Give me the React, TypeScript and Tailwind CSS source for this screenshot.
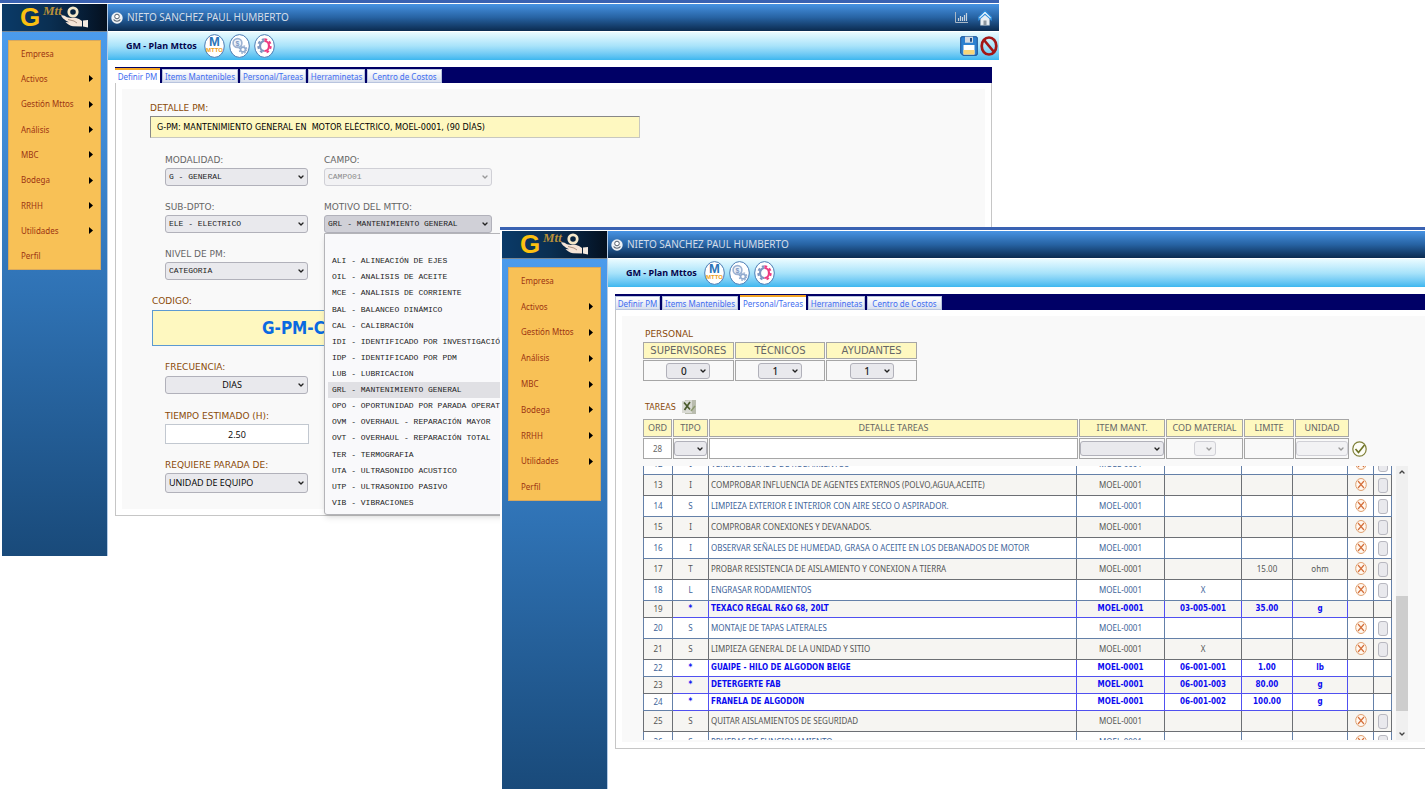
import { ReactNode } from 'react';
import { ChevronDown, ChevronUp } from 'lucide-react';
import { clsx } from 'clsx';

const MENU = [
  { label: 'Empresa', sub: false },
  { label: 'Activos', sub: true },
  { label: 'Gestión Mttos', sub: true },
  { label: 'Análisis', sub: true },
  { label: 'MBC', sub: true },
  { label: 'Bodega', sub: true },
  { label: 'RRHH', sub: true },
  { label: 'Utilidades', sub: true },
  { label: 'Perfil', sub: false },
];

const TABS = [
  { label: 'Definir PM', width: 'w-[45px]' },
  { label: 'Items Mantenibles', width: 'w-[76px]' },
  { label: 'Personal/Tareas', width: 'w-[66px]' },
  { label: 'Herraminetas', width: 'w-[57px]' },
  { label: 'Centro de Costos', width: 'w-[75px]' },
];

const MOTIVOS = [
  '',
  'ALI - ALINEACIÓN DE EJES',
  'OIL - ANALISIS DE ACEITE',
  'MCE - ANALISIS DE CORRIENTE',
  'BAL - BALANCEO DINÁMICO',
  'CAL - CALIBRACIÓN',
  'IDI - IDENTIFICADO POR INVESTIGACIÓN',
  'IDP - IDENTIFICADO POR PDM',
  'LUB - LUBRICACION',
  'GRL - MANTENIMIENTO GENERAL',
  'OPO - OPORTUNIDAD POR PARADA OPERATIVA',
  'OVM - OVERHAUL - REPARACIÓN MAYOR',
  'OVT - OVERHAUL - REPARACIÓN TOTAL',
  'TER - TERMOGRAFIA',
  'UTA - ULTRASONIDO ACUSTICO',
  'UTP - ULTRASONIDO PASIVO',
  'VIB - VIBRACIONES',
];

interface Task {
  ord: number;
  tipo: string;
  detalle: string;
  material?: string;
  limite?: string;
  unidad?: string;
}

const TASKS: Task[] = [
  { ord: 12, tipo: 'I', detalle: 'VERIFICA ESTADO DE RODAMIENTOS' },
  { ord: 13, tipo: 'I', detalle: 'COMPROBAR INFLUENCIA DE AGENTES EXTERNOS (POLVO,AGUA,ACEITE)' },
  { ord: 14, tipo: 'S', detalle: 'LIMPIEZA EXTERIOR E INTERIOR CON AIRE SECO O ASPIRADOR.' },
  { ord: 15, tipo: 'I', detalle: 'COMPROBAR CONEXIONES Y DEVANADOS.' },
  { ord: 16, tipo: 'I', detalle: 'OBSERVAR SEÑALES DE HUMEDAD, GRASA O ACEITE EN LOS DEBANADOS DE MOTOR' },
  { ord: 17, tipo: 'T', detalle: 'PROBAR RESISTENCIA DE AISLAMIENTO Y CONEXION A TIERRA', limite: '15.00', unidad: 'ohm' },
  { ord: 18, tipo: 'L', detalle: 'ENGRASAR RODAMIENTOS', material: 'X' },
  { ord: 19, tipo: '*', detalle: 'TEXACO REGAL R&O 68, 20LT', material: '03-005-001', limite: '35.00', unidad: 'g' },
  { ord: 20, tipo: 'S', detalle: 'MONTAJE DE TAPAS LATERALES' },
  { ord: 21, tipo: 'S', detalle: 'LIMPIEZA GENERAL DE LA UNIDAD Y SITIO', material: 'X' },
  { ord: 22, tipo: '*', detalle: 'GUAIPE - HILO DE ALGODON BEIGE', material: '06-001-001', limite: '1.00', unidad: 'lb' },
  { ord: 23, tipo: '*', detalle: 'DETERGERTE FAB', material: '06-001-003', limite: '80.00', unidad: 'g' },
  { ord: 24, tipo: '*', detalle: 'FRANELA DE ALGODON', material: '06-001-002', limite: '100.00', unidad: 'g' },
  { ord: 25, tipo: 'S', detalle: 'QUITAR AISLAMIENTOS DE SEGURIDAD' },
  { ord: 26, tipo: 'S', detalle: 'PRUEBAS DE FUNCIONAMIENTO' },
];

function Logo() {
  return (
    <svg viewBox="0 0 105 27" className="h-[27px] w-[105px] shrink-0" aria-label="GMtto">
      <defs>
        <linearGradient id="logoBg" x1="0" x2="1" y1="0" y2="0">
          <stop offset="0" stopColor="#0a3a68" />
          <stop offset="0.45" stopColor="#0a2f52" />
          <stop offset="0.8" stopColor="#061c34" />
          <stop offset="1" stopColor="#04101f" />
        </linearGradient>
      </defs>
      <rect width="105" height="27" fill="url(#logoBg)" />
      <text x="18" y="22" fontFamily="Liberation Sans" fontWeight="bold" fontSize="26" fill="#fcc010">
        G
      </text>
      <text x="41" y="11" fontFamily="Liberation Serif" fontStyle="italic" fontWeight="bold" fontSize="13" fill="#b8903a">
        Mtt
      </text>
      <circle cx="71" cy="8" r="4.2" fill="none" stroke="#f3e6c8" strokeWidth="2.8" />
      <path
        d="M59 11.500c2-.6 4 .4 6 1.800l4 .8c2-.8 5-.6 8 .9l3 2v5.500l-9-.2c-3-.4-5.500-2-7.500-4.200l3.500.2-3-1.600c-2-1.400-4-3-5-5.200z"
        fill="#f5e4d6"
      />
      <path d="M66 15.500l6 1.500 3 2" fill="none" stroke="#8a6f5c" strokeWidth="0.700" />
      <path d="M81 16.500l5-.5v7.500l-5-1z" fill="#f3e9df" />
    </svg>
  );
}

function ToolButton({ label, children }: { label: string; children: ReactNode }) {
  return (
    <button type="button" aria-label={label} className="h-6 w-[21px]">
      <svg viewBox="0 0 21 24" className="h-6 w-[21px]">
        <ellipse cx="10.500" cy="12" rx="9.800" ry="11.400" fill="#fff" stroke="#4a7cb4" />
        {children}
      </svg>
    </button>
  );
}

function Sidebar({ menuHeight }: { menuHeight: string }) {
  return (
    <aside className="flex w-[106px] shrink-0 flex-col border-r border-[#b4cbe6]">
      <Logo />
      <div className="grow border-t border-[#7a8894] bg-linear-to-b from-[#4b9bec] via-[#2f72b4] to-[#194a7a] px-1.5 pt-2">
        <nav className={clsx('flex flex-col border border-[#d8a95e] bg-[#f8c156]', menuHeight)}>
          {MENU.map((item) => (
            <a
              key={item.label}
              href="#"
              className="flex flex-1 items-center justify-between pl-3 pr-[7px] font-['Noto_Sans'] text-[8px] text-[#9c3412]"
            >
              {item.label}
              {item.sub && (
                <svg viewBox="0 0 4 7" className="h-[7px] w-1">
                  <path d="M0 0l4 3.500-4 3.500z" fill="#000" />
                </svg>
              )}
            </a>
          ))}
        </nav>
      </div>
    </aside>
  );
}

function AppHeader({ actions }: { actions: boolean }) {
  return (
    <header className="flex h-[27px] items-center bg-linear-to-b from-[#4793e3] via-[#2763a3] to-[#0b2b50] pl-[3px] pr-[7px]">
      <svg viewBox="0 0 12 12" className="mr-1 h-3 w-3">
        <circle cx="6" cy="6" r="5.700" fill="#eef2f6" />
        <circle cx="6" cy="4.500" r="2.300" fill="#fff" stroke="#555f6b" />
        <path d="M2.600 7.500c1.800 2.300 5 2.300 6.800 0" fill="none" stroke="#555f6b" strokeWidth="1.200" />
      </svg>
      <span className="grow font-['Noto_Sans'] text-[10px] text-[#d3dde9]">NIETO SANCHEZ PAUL HUMBERTO</span>
      {actions && (
        <div className="flex items-center gap-2.5">
          <button type="button" aria-label="Indicadores">
            <svg viewBox="0 0 13 11" className="h-[11px] w-[13px]">
              <path d="M.5 0v10.500H13" fill="none" stroke="#a8b7c6" />
              <path d="M3.500 9V6M5.500 9V4M7.500 9V5M9.500 9V3M11.500 9V1" stroke="#c8d3de" strokeWidth="1.200" />
            </svg>
          </button>
          <button type="button" aria-label="Inicio">
            <svg viewBox="0 0 14 16" className="h-4 w-3.5">
              <path d="M2.500 8L7 4.500 11.500 8v7.300h-9z" fill="#e8eef2" stroke="#9eb0be" strokeWidth="0.600" />
              <path d="M5.500 10.500h3v4.800h-3z" fill="#8d979f" />
              <path d="M7 .8L.8 7v2.800L7 4.200l6.200 5.600V7z" fill="#f4fafe" stroke="#2d90e0" strokeWidth="1.100" />
            </svg>
          </button>
        </div>
      )}
    </header>
  );
}

function Toolbar({ actions }: { actions: boolean }) {
  return (
    <div className="mt-px flex h-[28px] items-center gap-1 bg-linear-to-b from-[#eafbff] via-[#a8e3fa] to-[#3bb7ef] pl-[18px] pr-px">
      <h1 className="w-[74px] whitespace-nowrap font-['Noto_Sans'] text-[9px] font-bold text-[#04044c]">
        GM - Plan Mttos
      </h1>
      <ToolButton label="Mantenimiento">
        <text x="10.500" y="12" textAnchor="middle" fontFamily="Liberation Sans" fontWeight="bold" fontSize="13" fill="#2a74b8">
          M
        </text>
        <text x="10.500" y="18" textAnchor="middle" fontFamily="Liberation Sans" fontWeight="bold" fontSize="6" fill="#f0a01c">
          MTTO
        </text>
      </ToolButton>
      <ToolButton label="Costos">
        <circle cx="8.500" cy="9" r="4.400" fill="#eef3fa" stroke="#9cb2d2" strokeWidth="1.600" />
        <text x="8.500" y="11.500" textAnchor="middle" fontFamily="Liberation Sans" fontWeight="bold" fontSize="7" fill="#7d9ac4">
          $
        </text>
        <circle cx="14" cy="15.500" r="2.400" fill="#fff" stroke="#92abcf" strokeWidth="1.600" />
        <circle cx="14" cy="15.500" r="3.800" fill="none" stroke="#92abcf" strokeWidth="1.200" strokeDasharray="1.600 1.400" />
      </ToolButton>
      <ToolButton label="Configurar">
        <path d="M10.500 7a4.500 5 0 0 0 0 10" fill="none" stroke="#7e96c0" strokeWidth="2.200" />
        <path d="M10.500 5.200a6.200 6.800 0 0 0 0 13.600" fill="none" stroke="#7e96c0" strokeWidth="2" strokeDasharray="2.700 2.400" />
        <path d="M10.500 7a4.500 5 0 0 1 0 10" fill="none" stroke="#ee3a80" strokeWidth="2.200" />
        <path d="M10.500 5.200a6.200 6.800 0 0 1 0 13.600" fill="none" stroke="#ee3a80" strokeWidth="2" strokeDasharray="2.700 2.400" />
      </ToolButton>
      {actions && (
        <div className="ml-auto flex items-center gap-0.5">
          <button type="button" aria-label="Guardar">
            <svg viewBox="0 0 18 20" className="h-5 w-[18px]">
              <path d="M2 .7h14q1.300 0 1.300 1.300v16q0 1.300-1.300 1.300H3l-2.300-2V2Q.7.7 2 .7z" fill="#2d80d0" stroke="#184f94" />
              <path d="M5 .7h8v6H5z" fill="#d5dbe2" />
              <path d="M10 2h2v3.700h-2z" fill="#234d84" />
              <path d="M3.500 9h11v9.500h-11z" fill="#fff" />
              <path d="M3.500 14h11v4.500h-11z" fill="#f8d678" />
            </svg>
          </button>
          <button type="button" aria-label="Cancelar">
            <svg viewBox="0 0 18 20" className="h-5 w-[18px]">
              <ellipse cx="9" cy="10" rx="7.300" ry="8.500" fill="none" stroke="#a31616" strokeWidth="2.700" />
              <path d="M4 4l10 12" stroke="#a31616" strokeWidth="2.700" />
            </svg>
          </button>
        </div>
      )}
    </div>
  );
}

interface WindowProps {
  active: string;
  menuHeight: string;
  actions?: boolean;
  className: string;
  children: ReactNode;
}

function AppWindow({ active, menuHeight, actions = false, className, children }: WindowProps) {
  return (
    <section className={clsx('isolate col-start-1 row-start-1 flex flex-col bg-white', className)}>
      <div className="mb-px h-[3px] bg-[#3a62b2]" />
      <div className="flex grow pl-0.5">
        <Sidebar menuHeight={menuHeight} />
        <div className="flex min-w-0 grow flex-col">
          <AppHeader actions={actions} />
          <Toolbar actions={actions} />
          <main className={clsx('pb-10 pl-[7px] pt-[7px]', actions && 'pr-[7px]')}>
            <div role="tablist" className="flex h-4 items-end gap-0.5 bg-[#000066]">
              {TABS.map((tab) => (
                <button
                  key={tab.label}
                  type="button"
                  role="tab"
                  aria-selected={tab.label === active}
                  className={clsx(
                    "whitespace-nowrap text-center font-['Noto_Sans'] text-[8px] leading-[13px] text-[#3f6df0]",
                    tab.width,
                    tab.label === active
                      ? 'h-[15px] border-t-2 border-[#f5a623] bg-white'
                      : 'h-3.5 border border-[#b8c4de] bg-linear-to-b from-white to-[#d9e0ee]',
                  )}
                >
                  {tab.label}
                </button>
              ))}
            </div>
            <div className={clsx('border-b border-l border-[#c6c6c6] p-1.5', actions ? 'border-r' : 'pr-0')}>
              <div className="bg-[#f9f9f9]">{children}</div>
            </div>
          </main>
        </div>
      </div>
    </section>
  );
}

interface SelectProps {
  id: string;
  label?: string;
  value: string;
  className?: string;
  disabled?: boolean;
}

function Select({ id, label, value, className, disabled }: SelectProps) {
  return (
    <div className={clsx('relative', className)}>
      <select
        id={id}
        aria-label={label}
        defaultValue={value}
        disabled={disabled}
        className="block h-full w-full appearance-none rounded-[3px] border border-[#b1b1ba] bg-[#e9e9ed] pl-[3px] pr-3 disabled:border-[#d0d0d6] disabled:bg-[#f2f2f4] disabled:text-[#8a8a8a]"
      >
        <option>{value}</option>
      </select>
      <ChevronDown
        className={clsx(
          'pointer-events-none absolute right-[3px] top-1/2 h-2 w-2 -translate-y-1/2',
          disabled ? 'text-[#999]' : 'text-[#222]',
        )}
        strokeWidth={4}
      />
    </div>
  );
}

function Label({ htmlFor, brown, children }: { htmlFor: string; brown?: boolean; children: ReactNode }) {
  return (
    <label
      htmlFor={htmlFor}
      className={clsx(
        "block whitespace-nowrap font-['DejaVu_Sans'] text-[9px] leading-[14px]",
        brown ? 'text-[#8a4a08]' : 'text-[#666]',
      )}
    >
      {children}
    </label>
  );
}

function DefinirForm() {
  return (
    <form className="pb-4 pl-7 pt-3">
      <Label htmlFor="detalle" brown>
        DETALLE PM:
      </Label>
      <input
        id="detalle"
        defaultValue="G-PM: MANTENIMIENTO GENERAL EN  MOTOR ELÉCTRICO, MOEL-0001, (90 DÍAS)"
        className="mt-px block h-[22px] w-[490px] border border-[#c8c8c0] border-l-[#888] border-t-[#888] bg-[#fef8c0] px-1.5 font-['DejaVu_Sans_Condensed'] text-[9px] text-black"
      />
      <div className="mt-[15px] grid grid-cols-[143px_168px] gap-x-4 gap-y-3.5 pl-[15px] font-['Liberation_Mono'] text-[8px] text-[#222]">
        <div>
          <Label htmlFor="modalidad">MODALIDAD:</Label>
          <Select id="modalidad" value="G - GENERAL" className="mt-px h-[18px]" />
        </div>
        <div>
          <Label htmlFor="campo">CAMPO:</Label>
          <Select id="campo" value="CAMPO01" disabled className="mt-px h-[18px]" />
        </div>
        <div>
          <Label htmlFor="subdpto">SUB-DPTO:</Label>
          <Select id="subdpto" value="ELE - ELECTRICO" className="mt-px h-[18px]" />
        </div>
        <div className="relative">
          <Label htmlFor="motivo">MOTIVO DEL MTTO:</Label>
          <Select id="motivo" value="GRL - MANTENIMIENTO GENERAL" className="mt-px h-[18px] [&>select]:bg-[#d0d0d7]" />
          <ul
            role="listbox"
            aria-label="Motivo del mtto"
            className="absolute left-0 top-full z-10 grid h-[282px] w-[220px] auto-rows-fr rounded-b-[3px] border border-[#b4b4b8] bg-[#f9f9fb] px-[3px] pb-[3px] pt-[3px] shadow-md"
          >
            {MOTIVOS.map((motivo) => (
              <li
                key={motivo}
                role="option"
                aria-selected={motivo.startsWith('GRL')}
                className="flex items-center whitespace-nowrap pl-1 aria-selected:bg-[#e0e0e4]"
              >
                {motivo}
              </li>
            ))}
          </ul>
        </div>
        <div>
          <Label htmlFor="nivel">NIVEL DE PM:</Label>
          <Select id="nivel" value="CATEGORIA" className="mt-px h-[18px]" />
        </div>
      </div>
      <div className="mt-3.5 pl-0.5">
        <Label htmlFor="codigo" brown>
          CODIGO:
        </Label>
        <input
          id="codigo"
          defaultValue="G-PM-C"
          className="mt-0.5 block h-9 w-[340px] border border-[#5c9ad2] bg-[#fef8c0] pl-[109px] font-['DejaVu_Sans_Condensed'] text-[17px] font-bold text-[#0a6ae0]"
        />
      </div>
      <div className="mt-3.5 w-[158px] pl-[15px] font-['Open_Sans'] text-[9px] text-black">
        <Label htmlFor="frecuencia" brown>
          FRECUENCIA:
        </Label>
        <Select id="frecuencia" value="DIAS" className="mt-0.5 h-[18px] [&>select]:text-center" />
      </div>
      <div className="mt-[15px] w-[159px] pl-[15px] font-['Open_Sans'] text-[9px] text-black">
        <Label htmlFor="tiempo" brown>
          TIEMPO ESTIMADO (H):
        </Label>
        <input
          id="tiempo"
          defaultValue="2.50"
          className="mt-px block h-5 w-full border border-[#c2c8d0] bg-white text-center"
        />
      </div>
      <div className="mt-3.5 w-[158px] pl-[15px] font-['Open_Sans'] text-[9px] text-black">
        <Label htmlFor="parada" brown>
          REQUIERE PARADA DE:
        </Label>
        <Select id="parada" value="UNIDAD DE EQUIPO" className="mt-px h-5" />
      </div>
    </form>
  );
}

const CREW = [
  { label: 'SUPERVISORES', value: '0' },
  { label: 'TÉCNICOS', value: '1' },
  { label: 'AYUDANTES', value: '1' },
];

const HEADINGS = ['ORD', 'TIPO', 'DETALLE TAREAS', 'ITEM MANT.', 'COD MATERIAL', 'LIMITE', 'UNIDAD'];

function TaskRow({ task }: { task: Task }) {
  const material = task.tipo === '*';
  const even = task.ord % 2 === 0;
  const edge = even ? 'border-[#6480a8] text-[#41659a]' : 'border-[#6c6f74] text-[#555]';
  const cell = clsx(
    'border-b border-r',
    material ? "border-[#5050f0] font-['DejaVu_Sans_Condensed'] font-bold text-[#0c0cf0]" : edge,
  );
  return (
    <tr className={clsx(material ? 'h-[17px]' : 'h-[21px]', even ? 'bg-white' : 'bg-[#f6f5f2]')}>
      <td className={clsx('border-b border-l border-r', edge)}>{task.ord}</td>
      <td className={cell}>{task.tipo}</td>
      <td className={clsx('whitespace-nowrap pl-0.5 text-left', cell)}>{task.detalle}</td>
      <td className={cell}>MOEL-0001</td>
      <td className={cell}>{task.material}</td>
      <td className={cell}>{task.limite}</td>
      <td className={cell}>{task.unidad}</td>
      <td className={clsx('border-b border-r', edge)}>
        {!material && (
          <button type="button" aria-label={`Eliminar ${task.ord}`} className="block h-3.5 w-full">
            <svg viewBox="0 0 12 14" className="mx-auto h-3.5 w-3">
              <ellipse cx="6" cy="6.500" rx="5.300" ry="6" fill="#fff8f0" stroke="#e0a070" />
              <path d="M3 3l6 7M9 3l-6 7" stroke="#d4703c" strokeWidth="1.200" />
            </svg>
          </button>
        )}
      </td>
      <td className={clsx('border-b border-r', edge)}>
        {!material && (
          <button
            type="button"
            aria-label={`Ver ${task.ord}`}
            className="mx-auto block h-[15px] w-2.5 rounded-[3px] border border-[#b8b8c0] bg-[#e9e9ed]"
          />
        )}
      </td>
    </tr>
  );
}

function TareasPanel() {
  return (
    <div className="pb-0.5 pl-[21px] pr-[17px] pt-[11px]">
      <h2 className="pl-0.5 font-['DejaVu_Sans'] text-[9px] leading-[14px] text-[#8a4a08]">PERSONAL</h2>
      <table className="-ml-px w-[276px] table-fixed border-separate border-spacing-px font-['DejaVu_Sans'] text-[10px] leading-[14px] text-[#666]">
        <thead>
          <tr className="h-[17px]">
            {CREW.map((item) => (
              <th key={item.label} className="border border-[#a6a6a6] bg-[#fef8c0] p-0 font-normal">
                {item.label}
              </th>
            ))}
          </tr>
        </thead>
        <tbody>
          <tr className="h-[21px]">
            {CREW.map((item) => (
              <td key={item.label} className="border border-[#a6a6a6] p-0">
                <Select
                  id={item.label}
                  label={item.label}
                  value={item.value}
                  className="mx-auto h-4 w-11 font-['Noto_Sans'] font-medium text-[#222] [&>select]:text-center"
                />
              </td>
            ))}
          </tr>
        </tbody>
      </table>
      <div className="mt-[17px] flex h-4 items-center gap-1.5 pl-0.5">
        <h2 className="pt-0.5 font-['DejaVu_Sans'] text-[8px] text-[#8a4a08]">TAREAS</h2>
        <button type="button" aria-label="Exportar a Excel">
          <svg viewBox="0 0 14 14" className="h-3.5 w-3.5">
            <path d="M3 0h11v14H3z" fill="#b9bcae" />
            <path d="M0 1l10-1v13H0z" fill="#d9dad4" />
            <path d="M2 2.500l6 7M8 2l-5.500 8" stroke="#4a5a2c" strokeWidth="1.700" />
            <path d="M9 11l4-5" stroke="#8d9a70" strokeWidth="1.500" />
          </svg>
        </button>
      </div>
      <div className="-ml-px mt-[3px] pr-[15px]">
        <table className="w-full table-fixed border-separate border-spacing-px text-center font-['Noto_Sans'] text-[9px] leading-[12px] text-[#666]">
          <colgroup>
            <col className="w-[29px]" />
            <col className="w-[35px]" />
            <col />
            <col className="w-[86px]" />
            <col className="w-[77px]" />
            <col className="w-[50px]" />
            <col className="w-[54px]" />
            <col className="w-[42px]" />
          </colgroup>
          <thead>
            <tr className="h-[18px]">
              {HEADINGS.map((heading) => (
                <th key={heading} className="border border-[#a6a6a6] bg-[#fef8c0] p-0 font-normal">
                  {heading}
                </th>
              ))}
              <th />
            </tr>
          </thead>
          <tbody>
            <tr className="h-[21px]">
              <td className="border border-[#a6a6a6] bg-white p-0">
                <input aria-label="Ord" defaultValue="28" className="block w-full text-center text-[8px]" />
              </td>
              <td className="border border-[#a6a6a6] p-0">
                <Select id="tipo" label="Tipo" value="" className="h-[15px]" />
              </td>
              <td className="border border-[#a6a6a6] bg-white p-0">
                <input aria-label="Detalle tareas" className="block w-full px-1" />
              </td>
              <td className="border border-[#a6a6a6] p-0">
                <Select id="item" label="Item mant." value="" className="h-[15px]" />
              </td>
              <td className="border border-[#a6a6a6] p-0">
                <Select id="material" label="Cod material" value="" disabled className="mx-auto h-[15px] w-[22px]" />
              </td>
              <td className="border border-[#a6a6a6] p-0">
                <input aria-label="Limite" className="block w-full px-1" />
              </td>
              <td className="border border-[#a6a6a6] p-0">
                <Select id="unidad" label="Unidad" value="" disabled className="h-[15px]" />
              </td>
              <td className="p-0 pl-0.5">
                <button type="button" aria-label="Agregar" className="block">
                  <svg viewBox="0 0 15 16" className="h-4 w-[15px]">
                    <ellipse cx="7.500" cy="8" rx="6.700" ry="7.200" fill="#fdfdf6" stroke="#7f8038" strokeWidth="1.200" />
                    <path d="M3.500 8l3 3.500 6-7.500" fill="none" stroke="#6f7428" strokeWidth="1.700" />
                  </svg>
                </button>
              </td>
            </tr>
          </tbody>
        </table>
      </div>
      <div className="mt-1.5 flex h-[274px] gap-1 overflow-hidden">
        <div className="min-w-0 grow">
          <table className="-mt-3 w-full table-fixed border-separate border-spacing-0 text-center font-['Noto_Sans'] text-[8px] leading-[12px] [&_td]:py-0 [&_td]:pr-0">
            <colgroup>
              <col className="w-[30px]" />
              <col className="w-[36px]" />
              <col />
              <col className="w-[88px]" />
              <col className="w-[77px]" />
              <col className="w-[51px]" />
              <col className="w-[55px]" />
              <col className="w-[26px]" />
              <col className="w-[18px]" />
            </colgroup>
            <tbody>
              {TASKS.map((task) => (
                <TaskRow key={task.ord} task={task} />
              ))}
            </tbody>
          </table>
        </div>
        <div className="flex w-3 shrink-0 flex-col bg-[#f0f0f0] text-[#444]">
          <ChevronUp className="mx-auto my-0.5 h-2 w-2" strokeWidth={4} />
          <div className="mt-[118px] h-[115px] bg-[#cdcdcd]" />
          <ChevronDown className="mx-auto mb-0.5 mt-auto h-2 w-2" strokeWidth={4} />
        </div>
      </div>
    </div>
  );
}

export default function App() {
  return (
    <div className="grid min-h-screen items-start overflow-hidden bg-white">
      <AppWindow active="Definir PM" menuHeight="h-[230px]" actions className="w-[70.1%]">
        <DefinirForm />
      </AppWindow>
      <AppWindow active="Personal/Tareas" menuHeight="h-[234px]" className="ml-[500px] mt-[227px] self-stretch">
        <TareasPanel />
      </AppWindow>
    </div>
  );
}
